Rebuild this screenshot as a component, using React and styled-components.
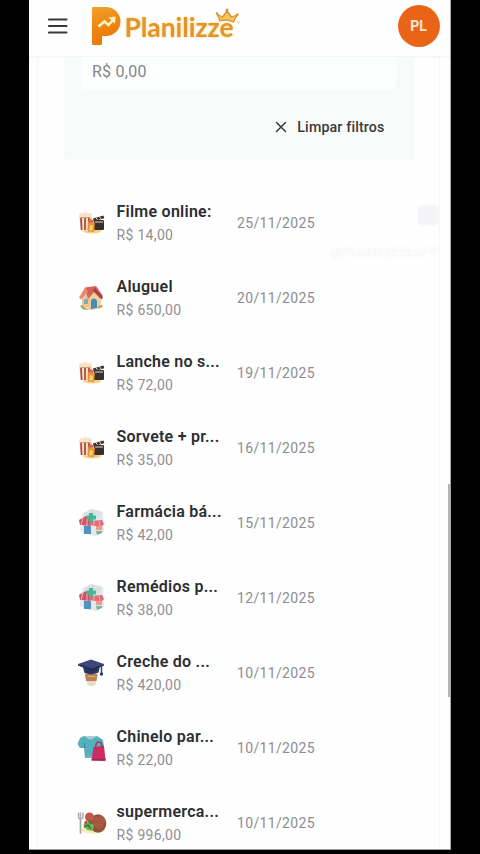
import React from "react";
import styled, { createGlobalStyle, css } from "styled-components";

const GlobalStyle = createGlobalStyle`
  * {
    box-sizing: border-box;
  }
  body {
    margin: 0;
    background: #000;
    font-family: Roboto, "Liberation Sans", sans-serif;
  }
`;

const flexCenterAlign = css`
  display: flex;
  align-items: center;
`;

const Screen = styled.div`
  height: 854px;
  padding: 0 29.5px 4px 29px;
  background: #000;
  overflow: hidden;
`;

const Page = styled.div`
  position: relative;
  display: flex;
  flex-direction: column;
  height: 850px;
  background: #fefefe;
  border-right: 1px solid #aaa;
  border-bottom: 1px solid #999;
  overflow: hidden;
`;

const HeaderBar = styled.header`
  ${flexCenterAlign}
  flex: none;
  height: 57px;
  padding: 0 10px 4px 19px;
  border-bottom: 1px solid #f3f5f6;
  box-shadow: 0 1px 2px rgba(30, 50, 60, 0.03);
`;

const MenuButton = styled.button`
  display: flex;
  padding: 0;
  border: 0;
  background: none;
`;

const LogoLabel = styled.div`
  display: flex;
  margin-left: 22px;
  padding-bottom: 1px;
  flex: 1;
`;

const Avatar = styled.div`
  ${flexCenterAlign}
  justify-content: center;
  width: 42px;
  height: 42px;
  border-radius: 50%;
  background: #ea6418;
  color: #fbe9d0;
  font-size: 14px;
  font-weight: 700;
`;

const Card = styled.main`
  flex: 1;
  margin: 0 10px 0 8px;
  border: solid #f6f6f9;
  border-width: 0 1px;
`;

const FilterPanel = styled.section`
  height: 102px;
  margin: 0 26px 0 26px;
  padding: 0 16px;
  background: #f8fbfa;
  border: solid #f5fbf9;
  border-width: 0 1px 1px;
`;

const AmountField = styled.div`
  height: 33px;
  padding: 5px 0 0 11px;
  border-radius: 0 0 6px 6px;
  background: #fdfefe;
  color: #858585;
  font-size: 16px;
  line-height: 20px;
  letter-spacing: 0.25px;
`;

const ClearButton = styled.button`
  ${flexCenterAlign}
  gap: 10px;
  margin: 27px 11px 0 auto;
  padding: 0;
  border: 0;
  background: none;
  color: #383a3d;
  font-family: inherit;
  font-size: 14.2px;
  font-weight: 500;
  line-height: 20px;
  letter-spacing: 0.16px;
`;

const ExpenseList = styled.ul`
  margin: 26px 0 0;
  padding: 0;
  list-style: none;
`;

const ExpenseRow = styled.li`
  ${flexCenterAlign}
  height: 75px;
  padding-left: 38px;
`;

const IconLabel = styled.span`
  display: flex;
  width: 32px;
  margin-right: 8.5px;
  padding-bottom: 2px;
`;

const ExpenseInfo = styled.div`
  width: 120.5px;
  padding-top: 1px;
`;

const Title = styled.div`
  color: #2d2e31;
  font-size: 16px;
  font-weight: 600;
  line-height: 24px;
  letter-spacing: 0.25px;
  white-space: nowrap;
`;

const Amount = styled.div`
  color: #8e8f93;
  font-size: 14px;
  line-height: 22px;
  letter-spacing: 0.32px;
`;

const DateLabel = styled.span`
  color: #8c8d91;
  font-size: 14px;
  letter-spacing: 0.34px;
`;

const ScrollThumb = styled.div`
  position: absolute;
  top: 484px;
  right: 0;
  width: 2px;
  height: 213px;
  background: #b3b3b3;
`;

const Watermark = styled.div`
  position: absolute;
  top: 205px;
  right: 11px;
  display: flex;
  flex-direction: column;
  align-items: flex-end;
  gap: 19px;
  color: #fff;
  font-size: 12px;
  letter-spacing: 0.7px;
  line-height: 16px;
  text-shadow: 0 0 2px #e6e6ea;
`;

const WatermarkBadge = styled.span`
  width: 22px;
  height: 21px;
  border: 2px solid #f7f7fa;
  border-radius: 5px;
  background: #f4f4f6;
`;

const MenuIcon = () => (
  <svg width="20" height="18" viewBox="0 0 20 18">
    <path d="M1 2.5h17.5M1 9h17.5M1 15.5h17.5" stroke="#37383c" strokeWidth="2.1" strokeLinecap="round" />
  </svg>
);

const Logo = () => (
  <svg width="152" height="42" viewBox="0 0 152 42">
    <defs>
      <linearGradient id="mark" x1="0" y1="0" x2="0.3" y2="1">
        <stop offset="0" stopColor="#f0a02c" />
        <stop offset="1" stopColor="#ee7c08" />
      </linearGradient>
    </defs>
    {/* mark */}
    <g fill="url(#mark)">
      <rect x="2" y="2" width="10" height="38" rx="1.5" />
      <path d="M2 3.5Q2 2 3.5 2H16a14.5 14.5 0 0 1 0 29H2z" />
    </g>
    <path d="M8.5 21.5l6-5 4 3.5 6-6.500" fill="none" stroke="#fff3c4" strokeWidth="2.5" />
    <path d="M18.500 12.500l7-1-.5 7.200z" fill="#fff3c4" />
    {/* wordmark */}
    <text
      x="34.500"
      y="32"
      textLength="109"
      lengthAdjust="spacingAndGlyphs"
      fontFamily="Lato, sans-serif"
      fontSize="26"
      fontWeight="700"
      fill="#e3942f"
      style={{ filter: "drop-shadow(0 0 1px #ffd66a)" }}
    >
      Planilizze
    </text>
    {/* crown */}
    <path
      d="M130 16l-2.500-6.500 5 2.500 4.500-6 4.500 6 5.500-2-3.500 7q-6.500-3-13.500-1z"
      fill="#f6c45c"
      stroke="#dd9135"
      strokeWidth="1.300"
      strokeLinejoin="round"
    />
    <g fill="#dd9135">
      <circle cx="127" cy="8.500" r="1.300" />
      <circle cx="137" cy="5" r="1.500" />
      <circle cx="147.500" cy="9.500" r="1.300" />
    </g>
    <circle cx="148.500" cy="17" r="1.500" fill="#fbe3ab" />
  </svg>
);

const CloseIcon = () => (
  <svg width="12" height="12" viewBox="0 0 12 12">
    <path d="M1.500 1.500l9 9M10.500 1.500l-9 9" stroke="#38393c" strokeWidth="1.500" strokeLinecap="round" />
  </svg>
);

const MovieIcon = () => (
  <svg width="32" height="32" viewBox="0 0 32 32">
    <ellipse cx="16" cy="25" rx="9" ry="2.500" fill="#f9cf83" />
    <path d="M3 10l13 1-1 14-10-1z" fill="#f8dcc4" />
    <path d="M5 12l.6 12M9 12v12M13 12l-.4 12" stroke="#a5483a" strokeWidth="1.700" />
    <g fill="#f6e2c4">
      <circle cx="5.500" cy="9.500" r="2.400" />
      <circle cx="9.500" cy="8.500" r="2.400" />
      <circle cx="13.500" cy="9.500" r="2.400" />
    </g>
    <path d="M4.500 11.500h10" stroke="#d39a78" strokeWidth="1" />
    <rect x="18" y="14" width="10" height="10" rx="1" fill="#38302f" />
    <path d="M17 12.500l10.500-3 .8 2.800-10.600 3z" fill="#393434" />
    <path d="M20 11.800l1.500 2M23.500 10.900l1.500 2M19 16h8" stroke="#e8ded7" strokeWidth="1" />
    <path d="M12 16l7 1-1 9-6-.5z" fill="#e88f43" />
    <path d="M14 19l3 .5-.5 5H13z" fill="#fbd15c" />
    <path d="M12 15l3-2 3 2-1 2-4-.5z" fill="#d9674a" />
  </svg>
);

const HouseIcon = () => (
  <svg width="32" height="32" viewBox="0 0 32 32">
    <path d="M6 16l6-7 12 3v14l-9 3-9-4z" fill="#efc493" />
    <path d="M14 16l6-4 5 5v10l-10 2z" fill="#f2cea1" />
    <path d="M9 6.500l11-1.500 7 10-3 2-6-6-6 7z" fill="#d9605a" />
    <path d="M9 6.500l-6 10 2 2 7-8z" fill="#e88975" />
    <path d="M17 9.500l8.500 9 1.500-2-8-10z" fill="#a44347" />
    <path d="M15 28v-7a3 3 0 0 1 6-1v7z" fill="#438fb2" />
    <rect x="8" y="18" width="4" height="5" fill="#7cabba" />
    <path d="M4 25q3-2 5 2l5 2-7-.5z" fill="#91ad68" />
    <path d="M22 25l4-1 1 2-5 1.500z" fill="#b9a365" />
  </svg>
);

const PharmacyIcon = () => (
  <svg width="32" height="32" viewBox="0 0 32 32">
    <path d="M6 8l9-5 12 3 1 20-9 4-12-3z" fill="#e3e8eb" />
    <path d="M8 7l8-4 10 3-3 7-13-1z" fill="#dce0e3" />
    <path d="M3 14l7-4 6 5-2 5-10-1z" fill="#cf5366" />
    <path d="M14 15l12-1 2 4-3 3-12-2z" fill="#e16a7b" />
    <path d="M7 12l-2 7M11 12v8M18 15v5M23 15l1 5" stroke="#f4b4ba" strokeWidth="1" />
    <path d="M13 7h4v2.500h3v4h-3V16h-4v-2.500h-2.500v-4H13z" fill="#44b892" />
    <rect x="8" y="20" width="7" height="8" fill="#5591bd" />
    <rect x="20" y="20" width="6" height="4" fill="#ee9a88" />
    <path d="M20 25h6v2l-5 2z" fill="#73b89e" />
    <path d="M4 19h3v7l-3-1z" fill="#e6eeed" />
  </svg>
);

const SchoolIcon = () => (
  <svg width="32" height="32" viewBox="0 0 32 32">
    <path d="M9 15h13l-2.500 14q-4.500 2-8 0z" fill="#e9d9c7" />
    <path d="M9 18h12.500l-1 7h-10.500z" fill="#bd8052" />
    <path d="M12 20.500h7" stroke="#e1ad75" strokeWidth="1" />
    <path d="M7 11l17-1-1.500 6.500q-7 3-14 .5z" fill="#29345f" />
    <path d="M2 8l13-4.500L28 8l-12 6z" fill="#3a487c" />
    <path d="M2 8l14 4.500L28 8v1.500L16 15 2 9.500z" fill="#242b52" />
    <path d="M25.500 9v8" stroke="#313a63" strokeWidth="1.400" />
    <circle cx="25.500" cy="18" r="1.700" fill="#313a63" />
  </svg>
);

const ShoppingIcon = () => (
  <svg width="32" height="32" viewBox="0 0 32 32">
    <path d="M8 5l4 1h5l4-1 6 4 1 6-4 2v9l-15 1-1-10-4 0-2.500-4 2.500-6z" fill="#57aebd" />
    <path d="M8.500 12v5" stroke="#398b9c" strokeWidth="1.300" fill="none" />
    <path d="M10 6q4 5 9 0l-2-1h-5z" fill="#a7ced0" />
    <path d="M9 25.500l12 1" stroke="#69bcaa" strokeWidth="2" />
    <path d="M17.500 16l10.500-1 1.500 14-14 .5z" fill="#cc2c61" />
    <path d="M15.500 28l14-.5V30L15.500 29.500z" fill="#a82550" />
    <path d="M20 18q-1-7 3-7 3 0 3 6" fill="none" stroke="#a33258" strokeWidth="1.400" />
  </svg>
);

const FoodIcon = () => (
  <svg width="32" height="32" viewBox="0 0 32 32">
    <ellipse cx="17" cy="24" rx="12" ry="3.500" fill="#f6ebb8" />
    <path d="M4.500 12v15" stroke="#aaa39c" strokeWidth="1.700" strokeLinecap="round" />
    <path d="M2.500 6.500v5q2 3 4.500 0v-5M4.500 6.500v6" fill="none" stroke="#b1b0ae" strokeWidth="1.500" />
    <ellipse cx="22" cy="17.500" rx="8.300" ry="9.200" fill="#94513a" />
    <ellipse cx="23" cy="16" rx="6" ry="6.500" fill="#a5593f" />
    <circle cx="13.500" cy="11" r="4.500" fill="#c3554c" />
    <path d="M7 18l6-2 5 3-1 6-6-1z" fill="#79b850" />
    <path d="M8 21l4-2 3 4M12 14l3 4" stroke="#368044" strokeWidth="2" fill="none" />
    <circle cx="10" cy="16.500" r="1.700" fill="#cf4b3b" />
  </svg>
);

const expenses = [
  { title: "Filme online:", amount: "R$ 14,00", date: "25/11/2025", Icon: MovieIcon },
  { title: "Aluguel", amount: "R$ 650,00", date: "20/11/2025", Icon: HouseIcon },
  { title: "Lanche no s...", amount: "R$ 72,00", date: "19/11/2025", Icon: MovieIcon },
  { title: "Sorvete + pr...", amount: "R$ 35,00", date: "16/11/2025", Icon: MovieIcon },
  { title: "Farmácia bá...", amount: "R$ 42,00", date: "15/11/2025", Icon: PharmacyIcon },
  { title: "Remédios p...", amount: "R$ 38,00", date: "12/11/2025", Icon: PharmacyIcon },
  { title: "Creche do ...", amount: "R$ 420,00", date: "10/11/2025", Icon: SchoolIcon },
  { title: "Chinelo par...", amount: "R$ 22,00", date: "10/11/2025", Icon: ShoppingIcon },
  { title: "supermerca...", amount: "R$ 996,00", date: "10/11/2025", Icon: FoodIcon },
];

const Header = () => (
  <HeaderBar>
    <MenuButton aria-label="Menu">
      <MenuIcon />
    </MenuButton>
    <LogoLabel>
      <Logo />
    </LogoLabel>
    <Avatar>PL</Avatar>
  </HeaderBar>
);

const App = () => {
  return (
    <Screen>
      <GlobalStyle />
      <Page>
        <Header />
        <Card>
          <FilterPanel>
            <AmountField>R$ 0,00</AmountField>
            <ClearButton>
              <CloseIcon />
              Limpar filtros
            </ClearButton>
          </FilterPanel>
          <ExpenseList>
            {expenses.map(({ title, amount, date, Icon }) => (
              <ExpenseRow key={title}>
                <IconLabel>
                  <Icon />
                </IconLabel>
                <ExpenseInfo>
                  <Title>{title}</Title>
                  <Amount>{amount}</Amount>
                </ExpenseInfo>
                <DateLabel>{date}</DateLabel>
              </ExpenseRow>
            ))}
          </ExpenseList>
        </Card>
        <Watermark>
          <WatermarkBadge />
          @PLANILIZZEAPP
        </Watermark>
        <ScrollThumb />
      </Page>
    </Screen>
  );
};

export default App;
